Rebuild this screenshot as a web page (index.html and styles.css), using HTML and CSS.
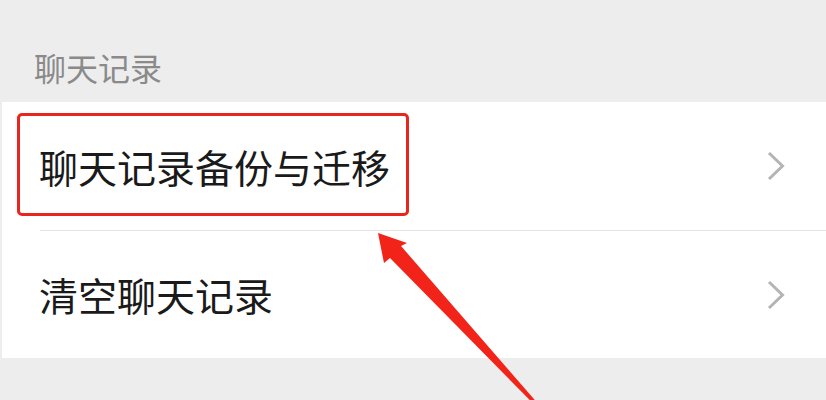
FILE: index.html
```html
<!DOCTYPE html>
<html lang="zh-CN">
<head>
<meta charset="utf-8">
<title>聊天记录</title>
<link rel="stylesheet" href="styles.css">
</head>
<body>
<div class="page">
  <div class="section-title">聊天记录</div>
  <div class="group">
    <div class="row">
      <span class="label">聊天记录备份与迁移</span>
      <svg class="chev" width="18" height="30" viewBox="0 0 18 30"><polyline points="2,2 15.5,15 2,28" fill="none" stroke="#b4b4b4" stroke-width="3"/></svg>
      <div class="highlight"></div>
    </div>
    <div class="sep"></div>
    <div class="row row2">
      <span class="label">清空聊天记录</span>
      <svg class="chev" width="18" height="30" viewBox="0 0 18 30"><polyline points="2,2 15.5,15 2,28" fill="none" stroke="#b4b4b4" stroke-width="3"/></svg>
    </div>
  </div>
  <svg class="arrow" width="826" height="400" viewBox="0 0 826 400"><polygon points="378,233 407,243 401,246 573,444 390,258 384,263" fill="#f2241a"/></svg>
</div>
</body>
</html>
```

FILE: styles.css
```css
html, body {
  margin: 0;
  padding: 0;
  background: #ededed;
}
.page {
  position: relative;
  width: 826px;
  height: 400px;
  overflow: hidden;
  font-family: "Noto Sans CJK SC", "Noto Sans", sans-serif;
}
.section-title {
  height: 32px;
  padding: 51px 0 19px 34px;
  font-size: 32px;
  line-height: 32px;
  color: #8a8a8a;
}
.group {
  margin-left: 2px;
  background: #ffffff;
}
.row {
  position: relative;
  height: 128px;
  display: flex;
  align-items: center;
  justify-content: space-between;
  padding-left: 37px;
  padding-right: 41px;
}
.row2 {
  height: 127px;
}
.label {
  font-size: 39px;
  line-height: 39px;
  color: #1a1a1a;
}
.chev {
  display: block;
}
.sep {
  height: 1px;
  margin-left: 38px;
  background: #e3e3e3;
}
.highlight {
  position: absolute;
  left: 15px;
  top: 11px;
  width: 386px;
  height: 97px;
  border: 3px solid #e8261e;
  border-radius: 5px;
}
.arrow {
  position: absolute;
  left: 0;
  top: 0;
  pointer-events: none;
}
```
